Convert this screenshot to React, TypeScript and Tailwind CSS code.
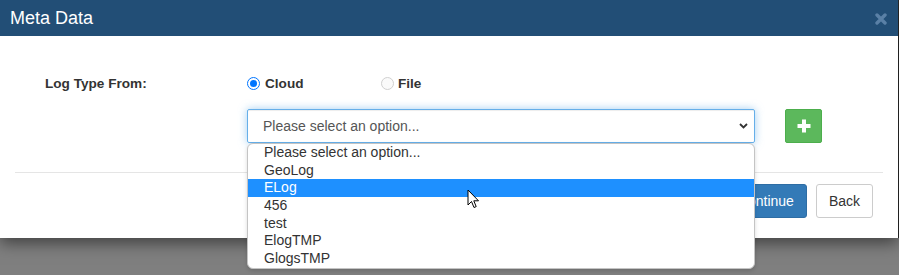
export default function App() {
  const options = [
    "Please select an option...",
    "GeoLog",
    "ELog",
    "456",
    "test",
    "ElogTMP",
    "GlogsTMP",
  ];
  return (
    <div className="relative h-[275px] w-[899px] overflow-hidden bg-[#7f7f7f] font-['Liberation_Sans',Arial,sans-serif]">
      <div className="flex items-start">
        <div className="relative z-10 w-[898px] bg-white shadow-[0_5px_15px_rgba(0,0,0,0.5)]">
          <div className="flex h-9 items-center justify-between bg-[#224e76] pl-[10px] pr-[11px]">
            <span className="text-[18px] leading-5 text-white">Meta Data</span>
            <svg width="12" height="12" viewBox="0 0 12 12" className="mt-px">
              <path d="M2 2 L10 10 M10 2 L2 10" stroke="#5a80a6" strokeWidth="3.4" strokeLinecap="round" />
            </svg>
          </div>
          <div className="pt-[38px]">
            <div className="flex h-5 items-center">
              <div className="w-[247px] pl-[45px] text-[13.6px] font-bold text-[#333]">Log Type From:</div>
              <div className="flex w-[134px] items-center">
                <span className="mt-[-2px] flex h-[13px] w-[13px] items-center justify-center rounded-full border-[1.5px] border-[#0075ff] bg-white">
                  <span className="h-[7px] w-[7px] rounded-full bg-[#0075ff]" />
                </span>
                <span className="ml-[5px] text-[13.6px] font-bold text-[#333]">Cloud</span>
              </div>
              <div className="flex items-center">
                <span className="mt-[-2px] h-[13px] w-[13px] rounded-full border border-[#d0d0d0] bg-[#fafafa]" />
                <span className="ml-[4px] text-[13.6px] font-bold text-[#333]">File</span>
              </div>
            </div>
            <div className="mt-[15px] flex items-start pl-[247px]">
              <div className="flex h-[34px] w-[508px] items-center justify-between rounded-[2px] border border-[#66afe9] pl-[15px] pr-[6px] shadow-[inset_0_1px_1px_rgba(0,0,0,0.075),0_0_8px_rgba(102,175,233,0.6)]">
                <span className="text-[14px] text-[#555]">Please select an option...</span>
                <svg width="9" height="6" viewBox="0 0 9 6">
                  <path d="M1 1 L4.5 4.5 L8 1" stroke="#333" strokeWidth="1.8" fill="none" />
                </svg>
              </div>
              <div className="ml-[30px] flex h-[34px] w-[37px] items-center justify-center rounded-[2px] border border-[#4cae4c] bg-[#5cb85c]">
                <svg width="14" height="14" viewBox="0 0 14 14">
                  <rect x="5" y="0.5" width="4" height="13" fill="white" />
                  <rect x="0.5" y="5" width="13" height="4" fill="white" />
                </svg>
              </div>
            </div>
            <div className="mx-[15px] mt-[29px] h-px bg-[#e5e5e5]" />
            <div className="flex justify-end gap-[9px] pb-[20px] pr-[25px] pt-[11px]">
              <div className="flex h-[34px] items-center rounded-[3px] border border-[#2e6da4] bg-[#337ab7] px-[12px] text-[14px] text-white">
                Continue
              </div>
              <div className="flex h-[34px] items-center rounded-[3px] border border-[#ccc] bg-white px-[12px] text-[14px] text-[#333]">
                Back
              </div>
            </div>
          </div>
        </div>
        <div className="h-[238px] w-px bg-[#2b2b2b]" />
      </div>

      <div className="absolute left-[247px] top-[143px] z-20 w-[508px] overflow-hidden rounded-[6px] border border-[#c4c4c4] bg-white shadow-[0_2px_4px_rgba(0,0,0,0.15)]">
        {options.map((o, i) => (
          <div
            key={o}
            className={
              i === 2
                ? "h-[17.67px] bg-[#1e90ff] pl-[16px] text-[14px] leading-[17.67px] text-white"
                : "h-[17.67px] pl-[16px] text-[14px] leading-[17.67px] text-[#333]"
            }
          >
            {o}
          </div>
        ))}
      </div>

      <svg className="absolute left-[467px] top-[189px] z-30" width="13" height="20" viewBox="0 0 13 20">
        <path d="M1 1 L1 16 L4.5 12.5 L7 18.5 L9.2 17.6 L6.8 11.8 L11.5 11.8 Z" fill="white" stroke="black" strokeWidth="1" strokeLinejoin="round" />
      </svg>
    </div>
  );
}
